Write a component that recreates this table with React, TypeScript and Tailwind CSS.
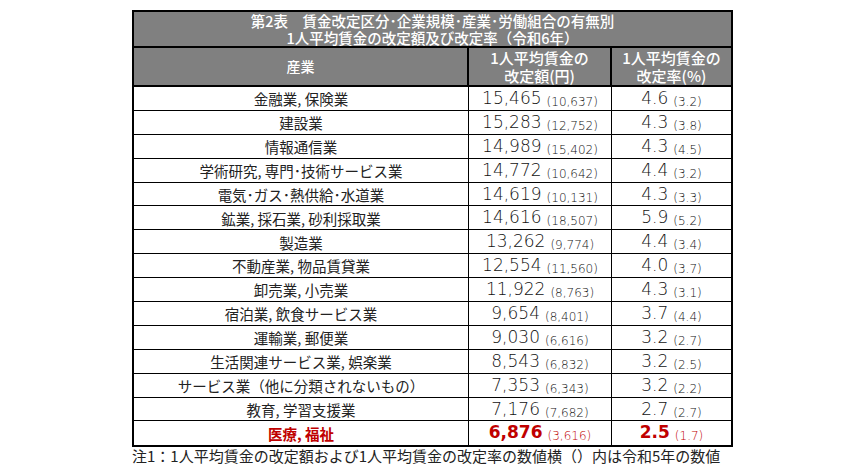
import React from "react";

type Row = {
  name: string;
  amount: string;
  prevAmount: string;
  rate: string;
  prevRate: string;
  highlight?: boolean;
};

const rows: Row[] = [
  { name: "金融業, 保険業", amount: "15,465", prevAmount: "(10,637)", rate: "4.6", prevRate: "(3.2)" },
  { name: "建設業", amount: "15,283", prevAmount: "(12,752)", rate: "4.3", prevRate: "(3.8)" },
  { name: "情報通信業", amount: "14,989", prevAmount: "(15,402)", rate: "4.3", prevRate: "(4.5)" },
  { name: "学術研究, 専門･技術サービス業", amount: "14,772", prevAmount: "(10,642)", rate: "4.4", prevRate: "(3.2)" },
  { name: "電気･ガス･熱供給･水道業", amount: "14,619", prevAmount: "(10,131)", rate: "4.3", prevRate: "(3.3)" },
  { name: "鉱業, 採石業, 砂利採取業", amount: "14,616", prevAmount: "(18,507)", rate: "5.9", prevRate: "(5.2)" },
  { name: "製造業", amount: "13,262", prevAmount: "(9,774)", rate: "4.4", prevRate: "(3.4)" },
  { name: "不動産業, 物品賃貸業", amount: "12,554", prevAmount: "(11,560)", rate: "4.0", prevRate: "(3.7)" },
  { name: "卸売業, 小売業", amount: "11,922", prevAmount: "(8,763)", rate: "4.3", prevRate: "(3.1)" },
  { name: "宿泊業, 飲食サービス業", amount: "9,654", prevAmount: "(8,401)", rate: "3.7", prevRate: "(4.4)" },
  { name: "運輸業, 郵便業", amount: "9,030", prevAmount: "(6,616)", rate: "3.2", prevRate: "(2.7)" },
  { name: "生活関連サービス業, 娯楽業", amount: "8,543", prevAmount: "(6,832)", rate: "3.2", prevRate: "(2.5)" },
  { name: "サービス業（他に分類されないもの）", amount: "7,353", prevAmount: "(6,343)", rate: "3.2", prevRate: "(2.2)" },
  { name: "教育, 学習支援業", amount: "7,176", prevAmount: "(7,682)", rate: "2.7", prevRate: "(2.7)" },
  { name: "医療, 福祉", amount: "6,876", prevAmount: "(3,616)", rate: "2.5", prevRate: "(1.7)", highlight: true },
];

const jp = "font-['Noto_Sans_CJK_JP',sans-serif]";
const num = "font-['DejaVu_Sans','Noto_Sans_CJK_JP',sans-serif]";
const cols = "grid grid-cols-[335px_143px_1fr]";

const NumCell = ({ main, prev, highlight, last }: { main: string; prev: string; highlight?: boolean; last?: boolean }) => (
  <div
    className={`flex items-baseline justify-center whitespace-nowrap pt-[1px] ${num} ${last ? "" : "border-r border-black"} ${
      highlight ? "text-[#c00000]" : "text-[#111]"
    }`}
  >
    <span className={`text-[17px] leading-[20px] ${highlight ? "font-bold" : "font-extralight"}`}>{main}</span>
    <span className="text-[12px] leading-[20px] ml-[5px] font-extralight translate-y-[2px]">{prev}</span>
  </div>
);

export default function App() {
  return (
    <div className="w-[865px] h-[470px] bg-white pt-[10px] pl-[132px]">
      <div className="w-[601px] border-2 border-black">
        <div
          className={`h-[36px] bg-[#808080] border-b-2 border-black flex flex-col items-center justify-center text-white text-[14.5px] font-medium leading-[17px] ${jp}`}
        >
          <span>第2表　賃金改定区分･企業規模･産業･労働組合の有無別</span>
          <span>1人平均賃金の改定額及び改定率（令和6年）</span>
        </div>
        <div className={`${cols} h-[39px] bg-[#808080] border-b-2 border-black text-white font-medium ${jp}`}>
          <div className="flex items-center justify-center border-r-2 border-black text-[14px]">産業</div>
          <div className="flex flex-col items-center justify-center border-r-2 border-black text-[15px] leading-[18px]">
            <span>1人平均賃金の</span>
            <span>改定額(円)</span>
          </div>
          <div className="flex flex-col items-center justify-center text-[15px] leading-[18px]">
            <span>1人平均賃金の</span>
            <span>改定率(%)</span>
          </div>
        </div>
        {rows.map((r, i) => (
          <div key={i} className={`${cols} h-[23.9px] ${i < rows.length - 1 ? "border-b border-black" : ""}`}>
            <div
              className={`flex items-center justify-center border-r border-black text-[14.5px] leading-none pt-[2px] whitespace-nowrap ${jp} ${
                r.highlight ? "text-[#c00000] font-bold" : "text-[#222]"
              }`}
            >
              {r.name}
            </div>
            <NumCell main={r.amount} prev={r.prevAmount} highlight={r.highlight} />
            <NumCell main={r.rate} prev={r.prevRate} highlight={r.highlight} last />
          </div>
        ))}
      </div>
      <p className={`text-[15px] leading-[17px] text-[#222] ${jp}`}>
        注1：1人平均賃金の改定額および1人平均賃金の改定率の数値横（）内は令和5年の数値
      </p>
    </div>
  );
}
